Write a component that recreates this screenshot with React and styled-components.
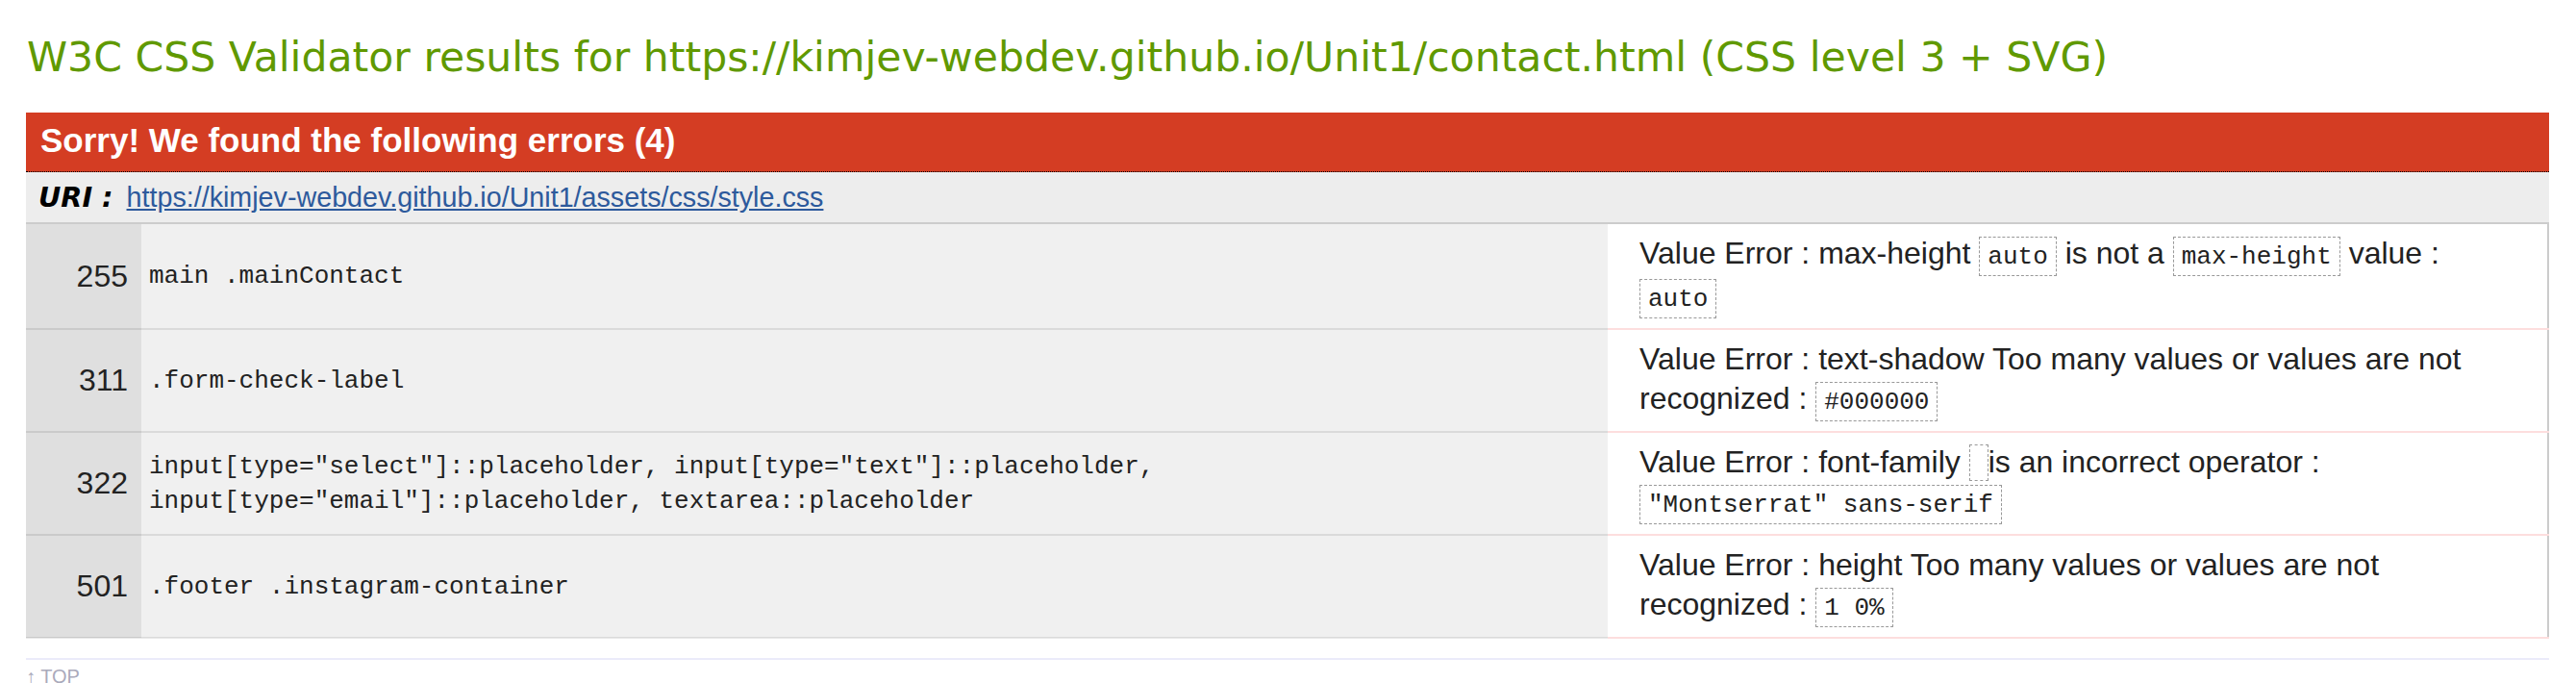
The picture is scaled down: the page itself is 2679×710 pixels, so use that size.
import React from 'react';
import styled, { createGlobalStyle } from 'styled-components';

const GlobalStyle = createGlobalStyle`
  html, body {
    margin: 0;
    padding: 0;
    background: #fff;
  }
  body {
    font-family: "Liberation Sans", Arial, sans-serif;
    color: #222;
  }
`;

const Page = styled.div`
  padding: 0 28px 0 27px;
`;

const Title = styled.h2`
  margin: 34px 0 33px 1px;
  font-family: "DejaVu Sans", Verdana, sans-serif;
  font-weight: normal;
  font-size: 42.6px;
  line-height: 50px;
  color: #609900;
  white-space: nowrap;
`;

const ErrorHead = styled.h3`
  margin: 0;
  height: 62px;
  box-sizing: border-box;
  padding: 0 0 4px 15px;
  background: #d43d23;
  border-bottom: 1px dotted #000;
  color: #fff;
  font-size: 35px;
  font-weight: bold;
  line-height: 58px;
`;

const UriRow = styled.div`
  display: flex;
  align-items: baseline;
  height: 52px;
  padding-left: 13px;
  background: #ededed;
  font-size: 28.7px;
  line-height: 52px;
`;

const UriLabel = styled.span`
  font-family: "DejaVu Sans", Verdana, sans-serif;
  font-weight: bold;
  font-style: italic;
  margin-right: 14px;
  color: #000;
`;

const UriLink = styled.a`
  color: #2d5a9c;
  text-decoration: underline;
`;

const Table = styled.table`
  width: 100%;
  table-layout: fixed;
  border-collapse: collapse;
  border-top: 2px solid #ccc;
  border-right: 2px solid #ccc;
`;

const LineCell = styled.td`
  width: 120px;
  box-sizing: border-box;
  padding: 0 14px 0 0;
  background: #dfdfdf;
  border-bottom: 2px solid rgba(0, 0, 0, 0.09);
  text-align: right;
  vertical-align: middle;
  font-size: 32px;
`;

const SelectorCell = styled.td`
  width: 1525px;
  box-sizing: border-box;
  padding: 0 8px;
  background: #f0f0f0;
  border-bottom: 2px solid rgba(0, 0, 0, 0.09);
  vertical-align: middle;
  font-family: "Liberation Mono", "Courier New", monospace;
  font-size: 26px;
  line-height: 36px;
`;

const MessageCell = styled.td`
  padding: 10px 30px 10px 33px;
  background: #fff;
  border-bottom: 2px solid #fddede;
  vertical-align: middle;
  font-size: 32px;
  line-height: 41px;
`;

const Value = styled.span`
  display: inline-block;
  padding: 7px 8px 6px;
  border: 1px dashed #999;
  font-family: "Liberation Mono", "Courier New", monospace;
  font-size: 26px;
  line-height: 26px;
  vertical-align: 0;
`;

const EmptyValue = styled.span`
  display: inline-block;
  width: 2px;
  height: 24px;
  padding: 6px 8px;
  border: 1px dashed #999;
  vertical-align: -9px;
`;

const Divider = styled.div`
  margin-top: 20px;
  border-top: 2px solid #ebebfa;
`;

const TopLink = styled.a`
  display: block;
  margin-top: 6px;
  font-size: 20px;
  color: #aab;
  text-decoration: none;
`;

const errors = [
  {
    line: 255,
    selector: ['main .mainContact'],
    message: (
      <>
        Value Error : max-height <Value>auto</Value> is not a <Value>max-height</Value> value :{' '}
        <Value>auto</Value>
      </>
    ),
  },
  {
    line: 311,
    selector: ['.form-check-label'],
    message: (
      <>
        Value Error : text-shadow Too many values or values are not recognized : <Value>#000000</Value>
      </>
    ),
  },
  {
    line: 322,
    selector: [
      'input[type="select"]::placeholder, input[type="text"]::placeholder,',
      'input[type="email"]::placeholder, textarea::placeholder',
    ],
    message: (
      <>
        Value Error : font-family <EmptyValue />is an incorrect operator :{' '}
        <Value>"Montserrat" sans-serif</Value>
      </>
    ),
  },
  {
    line: 501,
    selector: ['.footer .instagram-container'],
    message: (
      <>
        Value Error : height Too many values or values are not recognized : <Value>1 0%</Value>
      </>
    ),
  },
];

export default function App() {
  return (
    <Page>
      <GlobalStyle />
      <Title>
        W3C CSS Validator results for https://kimjev-webdev.github.io/Unit1/contact.html (CSS level 3 + SVG)
      </Title>
      <ErrorHead>Sorry! We found the following errors (4)</ErrorHead>
      <UriRow>
        <UriLabel>URI :</UriLabel>
        <UriLink href="#">https://kimjev-webdev.github.io/Unit1/assets/css/style.css</UriLink>
      </UriRow>
      <Table>
        <tbody>
          {errors.map(err => (
            <tr key={err.line}>
              <LineCell>{err.line}</LineCell>
              <SelectorCell>
                {err.selector.map(s => (
                  <div key={s}>{s}</div>
                ))}
              </SelectorCell>
              <MessageCell>{err.message}</MessageCell>
            </tr>
          ))}
        </tbody>
      </Table>
      <Divider />
      <TopLink href="#">↑ TOP</TopLink>
    </Page>
  );
}
